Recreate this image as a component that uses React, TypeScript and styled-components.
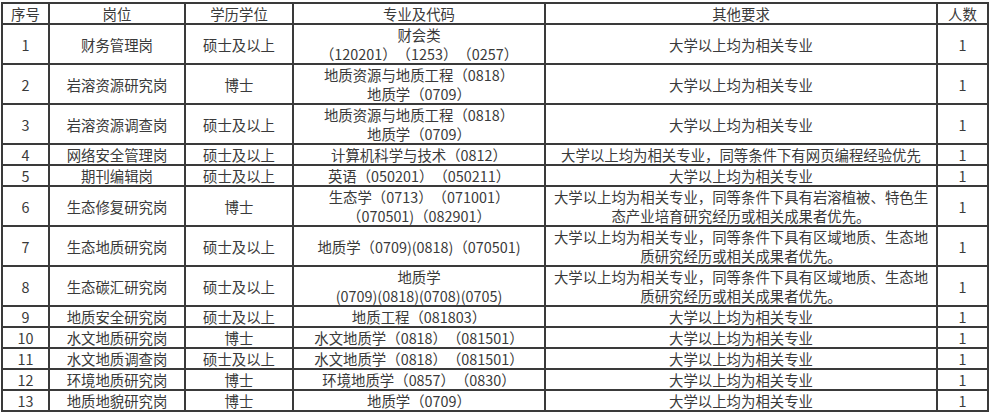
import React from 'react';
import styled, { createGlobalStyle } from 'styled-components';

const GlobalStyle = createGlobalStyle`
  html, body {
    margin: 0;
    padding: 0;
    background: #fff;
  }
`;

const Page = styled.div`
  padding: 2px 0 0 1px;
`;

const Table = styled.table`
  width: 988px;
  table-layout: fixed;
  border-collapse: collapse;
  border: 2px solid #3a3a3a;
  font-family: 'Noto Sans CJK SC', 'Noto Sans', sans-serif;
  font-size: 14.4px;
  line-height: 19px;
  color: #3a3a3a;
  text-spacing-trim: space-all;
`;

const HeadCell = styled.th`
  border: 2px solid #3a3a3a;
  padding: 0;
  font-weight: normal;
  text-align: center;
  vertical-align: middle;
`;

const Cell = styled.td<{ $pad?: number }>`
  border: 2px solid #3a3a3a;
  padding: 0 ${({ $pad }) => $pad ?? 0}px;
  text-align: center;
  vertical-align: middle;
  word-break: break-all;
`;

type Job = {
  no: number;
  post: string;
  degree: string;
  major: string[];
  other: string;
  count: number;
};

const BASIC = '大学以上均为相关专业';
const GEO = '大学以上均为相关专业，同等条件下具有区域地质、生态地质研究经历或相关成果者优先。';

const jobs: Job[] = [
  { no: 1, post: '财务管理岗', degree: '硕士及以上', major: ['财会类', '（120201）（1253）（0257）'], other: BASIC, count: 1 },
  { no: 2, post: '岩溶资源研究岗', degree: '博士', major: ['地质资源与地质工程（0818）', '地质学（0709）'], other: BASIC, count: 1 },
  { no: 3, post: '岩溶资源调查岗', degree: '硕士及以上', major: ['地质资源与地质工程（0818）', '地质学（0709）'], other: BASIC, count: 1 },
  { no: 4, post: '网络安全管理岗', degree: '硕士及以上', major: ['计算机科学与技术（0812）'], other: '大学以上均为相关专业，同等条件下有网页编程经验优先', count: 1 },
  { no: 5, post: '期刊编辑岗', degree: '硕士及以上', major: ['英语（050201）（050211）'], other: BASIC, count: 1 },
  { no: 6, post: '生态修复研究岗', degree: '博士', major: ['生态学（0713）（071001）', '（070501)（082901）'], other: '大学以上均为相关专业，同等条件下具有岩溶植被、特色生态产业培育研究经历或相关成果者优先。', count: 1 },
  { no: 7, post: '生态地质研究岗', degree: '硕士及以上', major: ['地质学（0709)(0818)（070501)'], other: GEO, count: 1 },
  { no: 8, post: '生态碳汇研究岗', degree: '硕士及以上', major: ['地质学', '(0709)(0818)(0708)(0705)'], other: GEO, count: 1 },
  { no: 9, post: '地质安全研究岗', degree: '硕士及以上', major: ['地质工程（081803）'], other: BASIC, count: 1 },
  { no: 10, post: '水文地质研究岗', degree: '博士', major: ['水文地质学（0818）（081501）'], other: BASIC, count: 1 },
  { no: 11, post: '水文地质调查岗', degree: '硕士及以上', major: ['水文地质学（0818）（081501）'], other: BASIC, count: 1 },
  { no: 12, post: '环境地质研究岗', degree: '博士', major: ['环境地质学（0857）（0830）'], other: BASIC, count: 1 },
  { no: 13, post: '地质地貌研究岗', degree: '博士', major: ['地质学（0709）'], other: BASIC, count: 1 },
];

const widths = [47, 136, 108, 252, 392, 51];
const heads = ['序号', '岗位', '学历学位', '专业及代码', '其他要求', '人数'];

export default function App() {
  return (
    <>
      <GlobalStyle />
      <Page>
        <Table>
          <colgroup>
            {widths.map((w, i) => (
              <col key={i} style={{ width: w }} />
            ))}
          </colgroup>
          <thead>
            <tr>
              {heads.map((h) => (
                <HeadCell key={h}>{h}</HeadCell>
              ))}
            </tr>
          </thead>
          <tbody>
            {jobs.map((j) => (
              <tr key={j.no}>
                <Cell>{j.no}</Cell>
                <Cell>{j.post}</Cell>
                <Cell>{j.degree}</Cell>
                <Cell>
                  {j.major.map((m, i) => (
                    <div key={i}>{m}</div>
                  ))}
                </Cell>
                <Cell $pad={5}>{j.other}</Cell>
                <Cell>{j.count}</Cell>
              </tr>
            ))}
          </tbody>
        </Table>
      </Page>
    </>
  );
}
